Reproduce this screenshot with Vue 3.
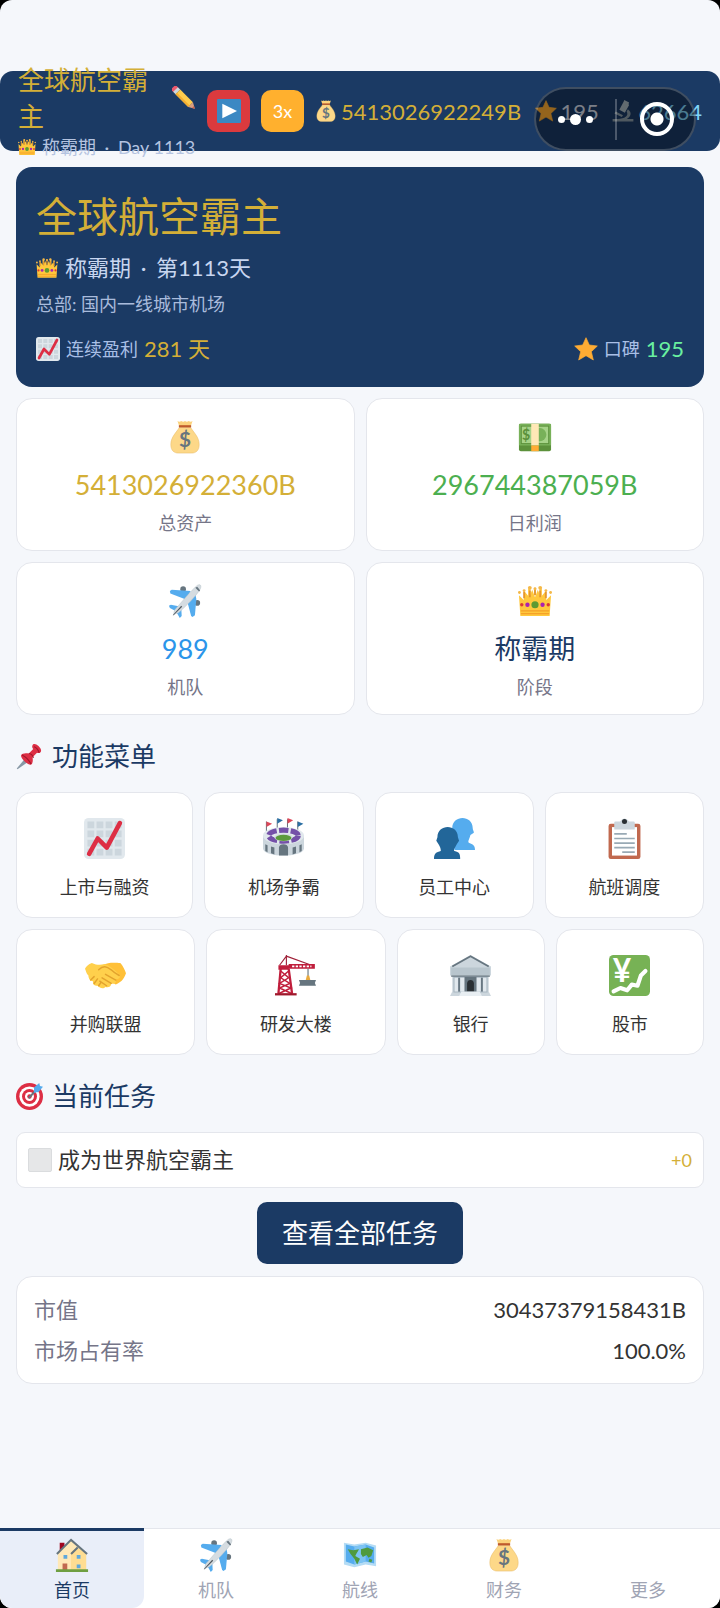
<script setup>
import { ref } from "vue";

const company = ref("全球航空霸主");
const stage = ref("称霸期");
const day = ref(1113);
const paused = ref(true);
const speed = ref(3);
const activeTab = ref("home");

const stats = [
  { icon: "bag", value: "5413026922360B", label: "总资产", color: "gold" },
  { icon: "cash", value: "296744387059B", label: "日利润", color: "green" },
  { icon: "plane", value: "989", label: "机队", color: "blue" },
  { icon: "crown", value: "称霸期", label: "阶段", color: "navy" },
];

const menuRows = [
  [
    { icon: "chart", label: "上市与融资" },
    { icon: "stadium", label: "机场争霸" },
    { icon: "people", label: "员工中心" },
    { icon: "clipboard", label: "航班调度" },
  ],
  [
    { icon: "handshake", label: "并购联盟" },
    { icon: "crane", label: "研发大楼" },
    { icon: "bank", label: "银行" },
    { icon: "stock", label: "股市" },
  ],
];

const tasks = ref([{ id: 1, title: "成为世界航空霸主", reward: 0, done: false }]);

const market = [
  { label: "市值", value: "30437379158431B" },
  { label: "市场占有率", value: "100.0%" },
];

const tabs = [
  { key: "home", icon: "house", label: "首页" },
  { key: "fleet", icon: "plane", label: "机队" },
  { key: "routes", icon: "map", label: "航线" },
  { key: "finance", icon: "bag", label: "财务" },
  { key: "more", icon: "", label: "更多" },
];

const nextSpeed = () => {
  speed.value = (speed.value % 3) + 1;
};
</script>

<template>
  <div class="app">
    <!-- icon sprite -->
    <svg class="sprite" aria-hidden="true">
      <symbol id="bag" viewBox="0 0 36 36">
        <path d="M10 1q2 1.500 4 0 2 1.500 4 0 2 1.500 4 0 2 1.500 4 0l-2 6H12z" fill="#fbd27c" />
        <path d="M12 8h12c3 5 9 10 9 18 0 7-4 9-8 9H11c-4 0-8-2-8-9C3 18 9 13 12 8z" fill="#fdd888" stroke="#e9bd6b" stroke-width=".6" />
        <path d="M11.500 5.500h13v2.400h-13z" fill="#bf5a2c" />
        <text x="18" y="29" text-anchor="middle" font-size="22" font-weight="bold" fill="#67757f">$</text>
      </symbol>
      <symbol id="cash" viewBox="0 0 36 36">
        <rect x="1" y="4" width="34" height="29" rx="2" fill="#5c913b" />
        <rect x="1" y="4" width="34" height="23" rx="1" fill="#78b159" />
        <rect x="3.500" y="6.500" width="29" height="18.500" fill="#a6d388" stroke="#5c913b" />
        <circle cx="23" cy="15.500" r="7" fill="#78b159" />
        <path d="M14 4h8v23h-8z" fill="#ffe8b6" />
        <path d="M14 27h8v6h-8z" fill="#ffac33" />
        <text x="8.600" y="21" text-anchor="middle" font-size="15" font-weight="bold" fill="#5c913b">$</text>
      </symbol>
      <symbol id="plane" viewBox="0 0 36 36">
        <circle cx="16" cy="5.500" r="3" fill="#66757f" />
        <circle cx="31" cy="20" r="3" fill="#66757f" />
        <path d="M2 7.500l2-1.500 20 1.500-5 9L2.500 10z" fill="#55acee" />
        <path d="M20 17l9-6 1 5-1.500 17-2.500 2-1.500-1z" fill="#55acee" />
        <path d="M1 23l2-1 11 2-5 5-7-3.500zM14 24l.5 10-2 2-4-7z" fill="#55acee" />
        <path d="M31 1.500c3-2 5 0 3 4-3 6-17 20-23 25l-5 1.500 1-4.500C13 21 25 6 31 1.500z" fill="#d5dce1" stroke="#b5c0c7" stroke-width=".5" />
        <path d="M5 33l9-10 1 1-9 9z" fill="#4e565c" />
        <path d="M29 4l2-1 3 4-1 1-2-2z" fill="#66757f" />
      </symbol>
      <symbol id="crown" viewBox="0 0 36 36">
        <path d="M2.500 34L1 12l5 5 1-9 5 6 3-8 3 8 3-8 3 8 5-6 1 9 5-5-1.500 22z" fill="#ffc83d" />
        <path d="M12 5v11M24 5v11" stroke="#ffc83d" stroke-width="2.500" fill="none" />
        <path d="M6.500 8v7M12.500 7v7M18 4v8M23.500 7v7M29.500 8v7" stroke="#e5962c" stroke-width="2" fill="none" />
        <g fill="#f4b848">
          <circle cx="1.500" cy="9" r="1.500" /><circle cx="6.500" cy="7" r="1.500" /><circle cx="12.500" cy="4" r="2" />
          <circle cx="18" cy="5" r="1.600" /><circle cx="23.500" cy="4" r="2" /><circle cx="29.500" cy="7" r="1.500" /><circle cx="34.500" cy="9" r="1.500" />
        </g>
        <path d="M3 28.500h30M3 31.500h30" stroke="#f19020" stroke-width="1" />
        <circle cx="18" cy="22" r="3.800" fill="#5c9a32" />
        <circle cx="10" cy="22" r="2.300" fill="#aa22b0" />
        <circle cx="26" cy="22" r="2.300" fill="#aa22b0" />
        <circle cx="4" cy="22" r="1.800" fill="#dd3a32" />
        <circle cx="32" cy="22" r="1.800" fill="#dd3a32" />
      </symbol>
      <symbol id="star" viewBox="0 0 36 36">
        <path d="M18 1l5 11 12 1.500-9 8.500 3 12.500L18 28 7 34.500 10 22 1 13.500 13 12z" fill="#ffac33" stroke="#ffac33" stroke-linejoin="round" />
      </symbol>
      <symbol id="chart" viewBox="0 0 36 36">
        <rect x="0" y="0" width="36" height="36" rx="4" fill="#e1e8ed" />
        <g fill="#ccd6dd">
          <path d="M3 3h6v6H3zM11 3h6v6h-6zM19 3h6v6h-6zM27 3h6v6h-6zM3 11h6v6H3zM11 11h6v6h-6zM19 11h6v6h-6zM27 11h6v6h-6z" />
          <path d="M3 19h6v6H3zM11 19h6v6h-6zM19 19h6v6h-6zM27 19h6v6h-6zM3 27h6v6H3zM11 27h6v6h-6zM19 27h6v6h-6zM27 27h6v6h-6z" />
        </g>
        <path d="M4.500 31.500L12 18l8 8L31.500 4.500" fill="none" stroke="#dd2e44" stroke-width="4" stroke-linecap="round" stroke-linejoin="round" />
      </symbol>
      <symbol id="pencil" viewBox="0 0 36 36">
        <g transform="rotate(45 18 18)">
          <rect x="-5" y="13" width="8" height="10" rx="3" fill="#ea596e" />
          <rect x="0" y="13" width="5" height="10" fill="#ccd6dd" />
          <path d="M5 13h27v10H5z" fill="#ffcc4d" />
          <path d="M5 20h27v3H5z" fill="#f4ae32" />
          <path d="M32 13l9 5-9 5z" fill="#d99e82" />
          <path d="M37 16l4 2-4 2z" fill="#d0604e" />
        </g>
      </symbol>
      <symbol id="play" viewBox="0 0 36 36">
        <rect width="36" height="36" rx="2" fill="#3b88c3" />
        <path d="M8 7l22 11L8 29z" fill="#fff" />
      </symbol>
      <symbol id="microscope" viewBox="0 0 36 36">
        <path d="M20 0l8 4-1 3 1 1-7 13-9-5 7-13z" fill="#aab8c2" />
        <path d="M26 15c8 6 4 13-2 16H9c12 0 19-5 15-12z" fill="#8899a6" />
        <path d="M6 19l12 6-2 3-12-6zM1 31h34v4H1z" fill="#8899a6" />
      </symbol>
      <symbol id="pin" viewBox="0 0 36 36">
        <path d="M11 22l4 4L2 35l-1-1z" fill="#8899a6" />
        <path d="M22 3c1-3 5-2 8 1s5 7 2 9c-2 1-3 0-4 0l-6 6c1 5 0 9-2 10C16 30 5 20 7 16c1-2 5-3 10-2l6-6c-1-1-2-3-1-5z" fill="#dd2e44" />
        <path d="M24 5c2 0 6 4 7 8M17 14c3 0 6 3 6 6M8 16c4 2 9 6 12 12" stroke="#a0182c" stroke-width="1.500" fill="none" />
      </symbol>
      <symbol id="target" viewBox="0 0 36 36">
        <circle cx="18" cy="18" r="18" fill="#dd2e44" />
        <circle cx="18" cy="18" r="13.500" fill="#fff" />
        <circle cx="18" cy="18" r="10" fill="#dd2e44" />
        <circle cx="18" cy="18" r="6" fill="#fff" />
        <circle cx="18" cy="18" r="3" fill="#dd2e44" />
        <path d="M17 20L31 5" stroke="#66757f" stroke-width="2.500" />
        <path d="M24 6l7-6 1 4 4 1-6 7-6 1z" fill="#55acee" />
      </symbol>
      <symbol id="stadium" viewBox="0 0 36 36">
        <path d="M3 12V3M12.500 9V1M21.500 9V1M30.500 12V3" stroke="#66757f" stroke-width=".9" />
        <path d="M3 3l5 2-5 3zM21.500 0l5 2-5 3z" fill="#dd4658" />
        <path d="M12.500 0l5 2-5 3zM30.500 3l5 2-5 3z" fill="#2b6fa3" />
        <path d="M0 15v12c1 8 35 8 36 0V15z" fill="#ccd6dd" />
        <ellipse cx="18" cy="15.500" rx="18" ry="7.500" fill="#e1e8ed" />
        <ellipse cx="18" cy="15.500" rx="13" ry="4.800" fill="none" stroke="#7450a8" stroke-width="4.500" stroke-dasharray="8 2" />
        <ellipse cx="18" cy="17" rx="8" ry="3.500" fill="#d5dde2" />
        <ellipse cx="18" cy="17.500" rx="7" ry="2.700" fill="#5c9a3c" />
        <path d="M14 33v-7c0-4 8-4 8 0v7zM2 23l2 1v6l-2-1zM7 25l3 1v6l-3-1zM34 23l-2 1v6l2-1zM29 25l-3 1v6l3-1z" fill="#66757f" />
      </symbol>
      <symbol id="people" viewBox="0 0 36 36">
        <path d="M16 9c0-12 18-12 18 0 0 2 1 2 1 4l-3 2c-1 4-3 6-1 7 3 1 5 2 5 6H18z" fill="#55acee" />
        <path d="M3 17c0-12 18-12 18 0l1 3-2 3c-2 4-3 5-2 6 4 1 5 2 5 7H0c0-5 2-6 6-7 0-3-1-4-2-6l-2-3z" fill="#226699" />
      </symbol>
      <symbol id="clipboard" viewBox="0 0 36 36">
        <rect x="4" y="5" width="28" height="31" rx="2" fill="#c1694f" />
        <path d="M7 8h22v25H7z" fill="#fff" />
        <path d="M9 10V4q0-1 1-1h4q4-5 8 0h4q1 0 1 1v6z" fill="#ccd6dd" />
        <circle cx="18" cy="3" r="2.200" fill="#292f33" />
        <path d="M9 14h11M9 18h18M9 22h18M9 26h18M16 30h11" stroke="#99aab5" stroke-width="1.500" />
      </symbol>
      <symbol id="handshake" viewBox="0 0 36 36">
        <path d="M16 9c4-3 11-2 15-2 2 2 4 6 5 9-2 6-5 8-9 10L14 18z" fill="#ffc038" />
        <path d="M6 7c4 2 8 2 11 1 4 1 8 4 13 9 2 3-1 5-3 4 1 3-1 5-4 4 0 3-3 4-5 3-2 2-5 1-7-1-3 0-4-1-4-4-3 0-4-3-4-5-2-2-2-4-3-6 1-2 3-4 6-5z" fill="#ffd04c" />
        <path d="M12 13c4-4 7-3 11 0 2 2 5 4 7 5M18 17l9 5M15 20l8 5M13 23l6 4M5 22l3-3M8 25l3-4M12 27l2-3" stroke="#e3a32d" stroke-width="1.300" fill="none" stroke-linecap="round" />
      </symbol>
      <symbol id="crane" viewBox="0 0 36 36">
        <path d="M10 0v9M10 1l-6 8M10 1l22 8" stroke="#a0223a" stroke-width="1" fill="none" />
        <path d="M3 9h9v4H3zM12 8h23v4H12z" fill="#c01e3c" />
        <path d="M15 10h17" stroke="#fff" stroke-width="1.600" stroke-dasharray="2 1.200" />
        <path d="M5 12L3 34M12 12l3 22" stroke="#c01e3c" stroke-width="2" fill="none" />
        <path d="M5 14l7 6-8 5 10 4-11 5M12 14l-7 6 8 5-9 4 11 5" stroke="#c01e3c" stroke-width="1.300" fill="none" />
        <path d="M0 34.500h19" stroke="#a0182c" stroke-width="2" />
        <path d="M29 12v8" stroke="#66757f" />
        <path d="M28 18h2l1 4h-4z" fill="#e9a93c" />
        <path d="M21 22h15l-1 2.500 1 2.500H21l1-2.500z" fill="#66757f" />
      </symbol>
      <symbol id="bank" viewBox="0 0 36 36">
        <path d="M18 0l18 10v8h-2v14l2 4H0l2-4V18H0v-8z" fill="#ccd6dd" />
        <path d="M3 19h30v14H3z" fill="#aab8c2" />
        <path d="M2 10L18 1l16 9" fill="none" stroke="#66757f" stroke-width="1.500" />
        <path d="M1 11h34v7H1z" fill="#b8c5cd" />
        <path d="M1 18h34v1H1z" fill="#66757f" />
        <path d="M4 20h3v12H4zM9 20h4v12H9zM23 20h4v12h-4zM29 20h3v12h-3z" fill="#e1e8ed" />
        <path d="M8 20v12M28 20v12M13.500 20h9v12h-9z" stroke="#66757f" stroke-width="1.500" fill="#66757f" />
        <path d="M15 32v-7c0-4 6-4 6 0v7z" fill="#292f33" />
        <path d="M10 32h16l2 4H8z" fill="#e8eef2" />
      </symbol>
      <symbol id="stock" viewBox="0 0 36 36">
        <rect width="36" height="36" rx="4" fill="#77b255" />
        <text x="11.500" y="24" text-anchor="middle" font-size="28" font-weight="bold" fill="#fff">¥</text>
        <path d="M4 32l6-3 6 2 4-5 5 1 3-9 4-4" fill="none" stroke="#fff" stroke-width="3.600" stroke-linecap="round" stroke-linejoin="round" />
      </symbol>
      <symbol id="house" viewBox="0 0 36 36">
        <path d="M5 5h5v10H5z" fill="#a0041e" />
        <path d="M3 15L17 3l16 12v19H3z" fill="#ffe8b6" />
        <path d="M17 15l6-5 10 6v18H17z" fill="#ffd983" opacity=".7" />
        <path d="M2 17L17 2l17 15M17 17l7-7" fill="none" stroke="#66757f" stroke-width="2.200" />
        <path d="M9 18h4v4H9zM23 18h4v4h-4zM23 28h4v4h-4z" fill="#5fa8dc" />
        <path d="M8 27h5v7H8z" fill="#c1694f" />
        <path d="M1 33h34v3H1z" fill="#6f9f42" />
      </symbol>
      <symbol id="map" viewBox="0 0 36 36">
        <path d="M1 5l11 2 12-2 11 3v22l-11-2-12 3-11-3z" fill="#b4dcf5" />
        <path d="M3 7l9 2 12-2 9 3v17l-9-2-12 3-9-3z" fill="#55acee" />
        <path d="M12 9l12-2v18l-12 3z" fill="#7cc3f3" />
        <path d="M5 12l6 1 6-1-3 5-1 2 5 3-3 6-3-6-4-5zM19 12l7-2 6 3-2 6-3 2-2-3-4 2-2-3zM28 22l3 1-1 3-3-1z" fill="#4f9a3e" />
      </symbol>
    </svg>

    <header class="topbar">
      <div class="company">
        <button class="company-name" type="button" aria-label="修改公司名称">
          <span>{{ company }}</span>
          <svg class="icon-md" aria-hidden="true"><use href="#pencil" /></svg>
        </button>
        <div class="company-stage">
          <svg class="icon-sm" aria-hidden="true"><use href="#crown" /></svg>
          <span>{{ stage }} <i class="sep">·</i> Day {{ day }}</span>
        </div>
      </div>
      <button class="control pause" type="button" aria-label="继续" @click="paused = !paused">
        <svg class="icon-md" aria-hidden="true"><use href="#play" /></svg>
      </button>
      <button class="control speed" type="button" @click="nextSpeed">{{ speed }}x</button>
      <div class="resources">
        <span class="resource gold">
          <svg class="icon-res" aria-hidden="true"><use href="#bag" /></svg>5413026922249B
        </span>
        <span class="resource pale">
          <svg class="icon-res" aria-hidden="true"><use href="#star" /></svg>195
        </span>
        <span class="resource sky">
          <svg class="icon-res" aria-hidden="true"><use href="#microscope" /></svg>62664
        </span>
      </div>

      <!-- host capsule floating over the bar -->
      <div class="capsule">
        <button class="capsule-btn" type="button" aria-label="菜单">
          <i class="dot"></i><i class="dot big"></i><i class="dot"></i>
        </button>
        <button class="capsule-btn" type="button" aria-label="关闭">
          <i class="ring"></i>
        </button>
      </div>
    </header>

    <main class="content">
      <section class="hero">
        <h1>{{ company }}</h1>
        <p class="hero-stage">
          <svg class="icon-res" aria-hidden="true"><use href="#crown" /></svg>
          <span>{{ stage }} <i class="sep">·</i> 第{{ day }}天</span>
        </p>
        <p class="hero-base">总部: 国内一线城市机场</p>
        <div class="hero-row">
          <div class="hero-item">
            <svg class="icon-md" aria-hidden="true"><use href="#chart" /></svg>
            <span>连续盈利</span>
            <b class="gold">281 天</b>
          </div>
          <div class="hero-item">
            <svg class="icon-md" aria-hidden="true"><use href="#star" /></svg>
            <span>口碑</span>
            <b class="mint">195</b>
          </div>
        </div>
      </section>

      <section class="stats">
        <div v-for="s in stats" :key="s.label" class="card stat">
          <svg class="icon-lg" aria-hidden="true"><use :href="'#' + s.icon" /></svg>
          <div class="stat-value" :class="s.color">{{ s.value }}</div>
          <div class="stat-label">{{ s.label }}</div>
        </div>
      </section>

      <h2 class="section-title">
        <svg class="icon-title" aria-hidden="true"><use href="#pin" /></svg>功能菜单
      </h2>
      <nav class="menu">
        <div v-for="(row, i) in menuRows" :key="i" class="menu-row">
          <button v-for="m in row" :key="m.label" class="card menu-item" type="button">
            <svg class="icon-xl" aria-hidden="true"><use :href="'#' + m.icon" /></svg>
            <span>{{ m.label }}</span>
          </button>
        </div>
      </nav>

      <h2 class="section-title">
        <svg class="icon-title" aria-hidden="true"><use href="#target" /></svg>当前任务
      </h2>
      <label v-for="t in tasks" :key="t.id" class="card task">
        <input v-model="t.done" type="checkbox" />
        <span>{{ t.title }}</span>
        <em class="gold">+{{ t.reward }}</em>
      </label>
      <button class="all-tasks" type="button">查看全部任务</button>

      <dl class="card market">
        <div v-for="m in market" :key="m.label" class="market-row">
          <dt>{{ m.label }}</dt>
          <dd>{{ m.value }}</dd>
        </div>
      </dl>
    </main>

    <nav class="tabbar">
      <button
        v-for="t in tabs"
        :key="t.key"
        class="tab"
        :class="{ active: activeTab === t.key }"
        type="button"
        @click="activeTab = t.key"
      >
        <svg class="icon-lg" aria-hidden="true"><use v-if="t.icon" :href="'#' + t.icon" /></svg>
        <span>{{ t.label }}</span>
      </button>
    </nav>
  </div>
</template>

<style>
body {
  background: #000;
}
</style>

<style scoped>
* {
  box-sizing: border-box;
}
.app {
  display: flex;
  flex-direction: column;
  min-height: 100vh;
  padding-top: 71px;
  overflow: hidden;
  border-radius: 12px;
  background: #f5f7fb;
  color: #333;
  font-family: Lato, "Noto Sans CJK SC", sans-serif;
  font-size: 22px;
}
.sprite {
  position: absolute;
  width: 0;
  height: 0;
}
button {
  margin: 0;
  padding: 0;
  border: none;
  background: none;
  color: inherit;
  font: inherit;
  cursor: pointer;
}
h1,
h2,
p,
dl,
dd {
  margin: 0;
  font-weight: normal;
}
svg {
  flex: none;
}
.icon-sm {
  width: 18px;
  height: 18px;
}
.icon-res {
  width: 22px;
  height: 22px;
}
.icon-md {
  width: 24px;
  height: 24px;
}
.icon-title {
  width: 27px;
  height: 27px;
}
.icon-lg {
  width: 34px;
  height: 34px;
}
.icon-xl {
  width: 41px;
  height: 41px;
}
.sep {
  margin: 0 4px;
  font-style: normal;
}
.gold {
  color: #d4af37;
}
.green {
  color: #4caf50;
}
.blue {
  color: #2b95ea;
}
.navy {
  color: #1b3a64;
}
.mint {
  color: #69f0a0;
}
.pale {
  color: #d3dae8;
}
.sky {
  color: #81d4fa;
}

/* top bar */
.topbar {
  position: relative;
  display: flex;
  align-items: center;
  height: 80px;
  padding: 0 18px;
  border-radius: 13px;
  background: #1b3a64;
}
.company {
  width: 178px;
  margin-right: 11px;
}
.company-name {
  display: flex;
  align-items: center;
  justify-content: space-between;
  width: 100%;
  color: #d4af37;
  font-size: 26px;
  line-height: 36px;
  text-align: left;
}
.company-name span {
  flex: 0 1 147px;
}
.company-stage {
  display: flex;
  align-items: center;
  gap: 6px;
  color: #b4c3e0;
  font-size: 18px;
  line-height: 26px;
  white-space: nowrap;
}
.control {
  display: flex;
  flex: none;
  align-items: center;
  justify-content: center;
  width: 43px;
  height: 42px;
  margin-right: 11px;
  border-radius: 10px;
  color: #fff;
  font-size: 18px;
}
.pause {
  background: #db3a3e;
}
.speed {
  background: #ffb02e;
}
.resources {
  display: flex;
  flex: 1;
  justify-content: space-between;
}
.resource {
  display: flex;
  align-items: center;
  gap: 4px;
}
.capsule {
  position: absolute;
  top: 16px;
  right: 24px;
  display: flex;
  width: 162px;
  height: 64px;
  border: 2px solid rgba(255, 255, 255, 0.2);
  border-radius: 32px;
  background: rgba(0, 0, 0, 0.42);
}
.capsule-btn {
  display: flex;
  flex: 1;
  align-items: center;
  justify-content: center;
  gap: 5px;
}
.capsule-btn + .capsule-btn::before {
  content: "";
  width: 2px;
  height: 41px;
  margin-right: 18px;
  background: rgba(255, 255, 255, 0.25);
}
.capsule-btn + .capsule-btn {
  justify-content: flex-start;
}
.dot {
  width: 7px;
  height: 7px;
  border-radius: 50%;
  background: #fff;
}
.dot.big {
  width: 11px;
  height: 11px;
}
.ring {
  width: 34px;
  height: 34px;
  border: 4px solid #fff;
  border-radius: 50%;
  background: radial-gradient(circle, #fff 6px, transparent 7px);
}

/* content */
.content {
  display: flex;
  flex-direction: column;
  padding: 16px;
}
.hero {
  padding: 20px;
  border-radius: 16px;
  background: #1b3a64;
}
.hero h1 {
  color: #d4af37;
  font-size: 41px;
  line-height: 60px;
}
.hero-stage {
  display: flex;
  align-items: center;
  gap: 7px;
  color: #c8d6f0;
  line-height: 42px;
}
.hero-base {
  color: #a9bbdc;
  font-size: 18px;
  line-height: 30px;
}
.hero-row {
  display: flex;
  justify-content: space-between;
  margin-top: 12px;
  line-height: 36px;
}
.hero-item {
  display: flex;
  align-items: center;
  gap: 6px;
}
.hero-item span {
  color: #a9bfe6;
  font-size: 18px;
}
.hero-item b {
  font-weight: normal;
}
.card {
  border: 1px solid #e4e6ec;
  border-radius: 16px;
  background: #fff;
}
.stats {
  display: grid;
  grid-template-columns: 1fr 1fr;
  gap: 11px;
  margin-top: 11px;
}
.stat {
  display: flex;
  flex-direction: column;
  align-items: center;
  padding: 21px 0 14px;
}
.stat-value {
  margin: 12px 0 6px;
  font-size: 27px;
  line-height: 38px;
}
.stat-label {
  color: #757588;
  font-size: 18px;
  line-height: 26px;
}
.section-title {
  display: flex;
  align-items: center;
  gap: 9px;
  margin: 23px 0 18px;
  color: #1b3a64;
  font-size: 26px;
  line-height: 36px;
}
.menu,
.menu-row {
  display: flex;
  gap: 11px;
}
.menu {
  flex-direction: column;
}
.menu-item {
  display: flex;
  flex: 1 1 auto;
  flex-direction: column;
  align-items: center;
  gap: 15px;
  padding: 25px 0 17px;
  border: 1px solid #e4e6ec;
  background: #fff;
  font-size: 18px;
  line-height: 26px;
}
.task {
  display: flex;
  align-items: center;
  gap: 6px;
  padding: 9px 11px;
  border-radius: 9px;
  line-height: 36px;
}
.task input {
  width: 24px;
  height: 24px;
  margin: 0;
  border: 1px solid #dadcde;
  border-radius: 2px;
  background: #e6e7e8;
  appearance: none;
}
.task input:checked {
  background: #4caf50;
}
.task em {
  margin-left: auto;
  font-size: 18px;
  font-style: normal;
}
.all-tasks {
  align-self: center;
  margin: 14px 0 12px;
  padding: 12px 25px;
  border-radius: 10px;
  background: #1b3a64;
  color: #fff;
  font-size: 26px;
  line-height: 38px;
}
.market {
  padding: 12px 17px;
}
.market-row {
  display: flex;
  justify-content: space-between;
  line-height: 41px;
}
.market dt {
  color: #757588;
}

/* bottom tabs */
.tabbar {
  display: flex;
  margin-top: auto;
  background: #fff;
}
.tab {
  display: flex;
  flex: 1;
  flex-direction: column;
  align-items: center;
  gap: 5px;
  padding: 9px 0 5px;
  border-top: 1px solid #e4e6ec;
  color: #a0a4b4;
  font-size: 18px;
  line-height: 26px;
}
.tab.active {
  padding-top: 7px;
  border-top: 3px solid #1b3a64;
  border-radius: 0 0 12px 12px;
  background: #e9eef9;
  color: #1b3a64;
}
</style>
